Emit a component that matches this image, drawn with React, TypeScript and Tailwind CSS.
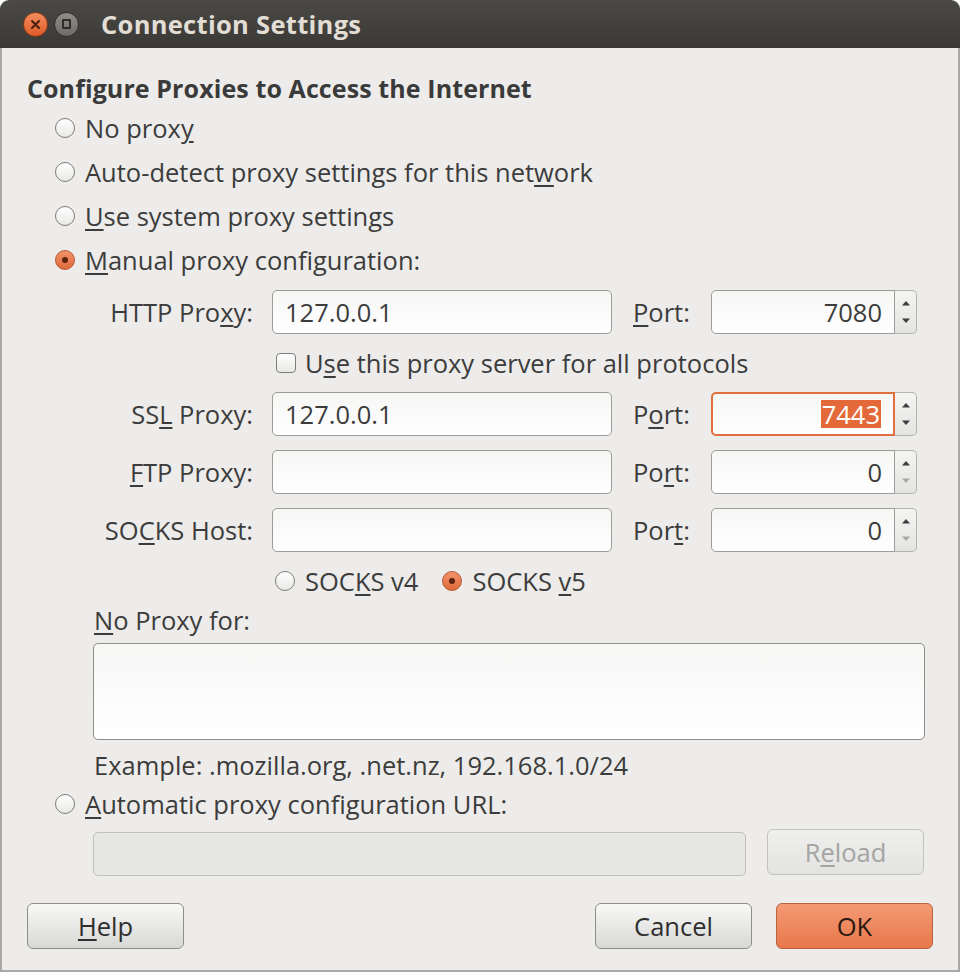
import React from 'react';

const font = { fontFamily: '"Open Sans", "Noto Sans", sans-serif' };

function U({ children }: { children: React.ReactNode }) {
    return <span className="underline underline-offset-[3px] decoration-[1.5px]">{children}</span>;
}

function Radio({ checked = false }: { checked?: boolean }) {
    if (checked) {
        return (
            <div className="w-[20px] h-[20px] rounded-full border border-[#b35a33] bg-gradient-to-b from-[#f2926a] to-[#e06a3a] flex items-center justify-center shrink-0">
                <div className="w-[6px] h-[6px] rounded-full bg-[#5a2410]" />
            </div>
        );
    }
    return <div className="w-[20px] h-[20px] rounded-full border border-[#7d7c78] bg-gradient-to-b from-white to-[#e8e8e6] shrink-0" />;
}

function Spin({ focused = false, value, selected = false }: { focused?: boolean; value: string; selected?: boolean }) {
    return (
        <div className="flex h-[44px] w-[206px]">
            <div
                className={
                    'flex-1 flex items-center justify-end pr-[12px] rounded-l-[5px] bg-gradient-to-b from-[#f6f6f5] to-white ' +
                    (focused ? 'border-2 border-[#e0703f]' : 'border border-[#9d9c98]')
                }
            >
                {selected ? (
                    <span className="bg-[#e4693a] text-white px-[1px] leading-[28px]">{value}</span>
                ) : (
                    <span>{value}</span>
                )}
            </div>
            <div className="w-[22px] border border-l-0 border-[#b3b2ae] rounded-r-[5px] bg-gradient-to-b from-[#f4f4f3] to-[#e4e4e2] flex flex-col items-center justify-between py-[9px]">
                <svg width="10" height="6" viewBox="0 0 10 6"><path d="M1 5.5 L5 1 L9 5.5 Z" fill="#3c3c3c" /></svg>
                <svg width="10" height="6" viewBox="0 0 10 6"><path d="M1 0.5 L5 5 L9 0.5 Z" fill={focused || value === '7080' ? '#3c3c3c' : '#a8a8a6'} /></svg>
            </div>
        </div>
    );
}

function TextBox({ value = '' }: { value?: string }) {
    return (
        <div className="w-[340px] h-[44px] shrink-0 border border-[#9d9c98] rounded-[5px] bg-gradient-to-b from-[#f6f6f5] to-white flex items-center px-[12px]">
            {value}
        </div>
    );
}

function Button({ children, primary = false, disabled = false, className = '' }: { children: React.ReactNode; primary?: boolean; disabled?: boolean; className?: string }) {
    const base = 'h-[46px] w-[157px] rounded-[6px] flex items-center justify-center border ';
    const look = primary
        ? 'border-[#b8653f] bg-gradient-to-b from-[#f39a74] to-[#e8774a] text-[#2a1a12]'
        : disabled
            ? 'border-[#c3c2be] bg-gradient-to-b from-[#efefee] to-[#e3e3e1] text-[#a4a4a2]'
            : 'border-[#8e8d89] bg-gradient-to-b from-[#f8f8f7] to-[#d8d8d6] text-[#2f2f2f]';
    return <div className={base + look + ' ' + className}>{children}</div>;
}

export default function App() {
    const portLabels: React.ReactNode[] = [
        <><U>P</U>ort:</>,
        <>P<U>o</U>rt:</>,
        <>Po<U>r</U>t:</>,
        <>Por<U>t</U>:</>,
    ];

    const rows = [
        { label: <>HTTP Pro<U>x</U>y:</>, value: '127.0.0.1', port: '7080' },
        { label: <>SS<U>L</U> Proxy:</>, value: '127.0.0.1', port: '7443', focused: true, selected: true },
        { label: <><U>F</U>TP Proxy:</>, value: '', port: '0' },
        { label: <>SO<U>C</U>KS Host:</>, value: '', port: '0' },
    ];

    const renderRow = (i: number) => {
        const r = rows[i];
        return (
            <div className="flex items-center h-[44px]">
                <div className="w-[226px] text-right whitespace-nowrap">{r.label}</div>
                <div className="w-[19px] shrink-0" />
                <TextBox value={r.value} />
                <div className="w-[99px] shrink-0 pl-[21px] whitespace-nowrap">{portLabels[i]}</div>
                <Spin value={r.port} focused={r.focused} selected={r.selected} />
            </div>
        );
    };

    return (
        <div className="w-[960px] h-[972px] bg-white text-[#3c3c3c] text-[25.5px] leading-[28px]" style={font}>
            <div className="w-[960px] h-[972px] flex flex-col">
                {/* Title bar */}
                <div className="h-[48px] shrink-0 rounded-t-[9px] bg-gradient-to-b from-[#4a4945] to-[#3a3935] flex items-center pl-[23px]">
                    <div className="w-[25px] h-[25px] rounded-full bg-gradient-to-b from-[#f58c5c] to-[#dd5a27] border border-[#8a3a1a] flex items-center justify-center">
                        <svg width="11" height="11" viewBox="0 0 11 11">
                            <path d="M2 2 L9 9 M9 2 L2 9" stroke="#4a1e0e" strokeWidth="2" strokeLinecap="round" />
                        </svg>
                    </div>
                    <div className="w-[25px] h-[25px] ml-[6px] rounded-full bg-gradient-to-b from-[#8f8e89] to-[#6c6b67] border border-[#2f2e2b] flex items-center justify-center">
                        <div className="w-[9px] h-[10px] border-[2px] border-[#2e2d2a] rounded-[1px]" />
                    </div>
                    <div className="ml-[22px] text-[#e2ded6] font-bold text-[25.5px] tracking-[0.3px]">Connection Settings</div>
                </div>

                {/* Body */}
                <div className="flex-1 bg-[#edecea] border-x-2 border-b-2 border-[#a9a8a4] pl-[25px] pr-[25px] flex flex-col">
                    <div className="mt-[26px] h-[28px] font-bold text-[#3a3a3a] text-[25px] tracking-[0.1px] whitespace-nowrap">
                        Configure Proxies to Access the Internet
                    </div>

                    <div className="mt-[4px] flex flex-col pl-[28px]">
                        <div className="h-[44px] flex items-center gap-[10px]"><Radio /><span>No prox<U>y</U></span></div>
                        <div className="h-[44px] flex items-center gap-[10px]"><Radio /><span>Auto-detect proxy settings for this net<U>w</U>ork</span></div>
                        <div className="h-[44px] flex items-center gap-[10px]"><Radio /><span><U>U</U>se system proxy settings</span></div>
                        <div className="h-[44px] flex items-center gap-[10px]"><Radio checked /><span><U>M</U>anual proxy configuration:</span></div>
                    </div>

                    <div className="mt-[8px] flex flex-col">
                        {renderRow(0)}
                        <div className="h-[58px] flex items-center pl-[249px] gap-[9px]">
                            <div className="w-[20px] h-[20px] rounded-[4px] border border-[#7d7c78] bg-gradient-to-b from-white to-[#e8e8e6]" />
                            <span>U<U>s</U>e this proxy server for all protocols</span>
                        </div>
                        {renderRow(1)}
                        <div className="h-[14px]" />
                        {renderRow(2)}
                        <div className="h-[14px]" />
                        {renderRow(3)}
                    </div>

                    <div className="mt-[4px] h-[50px] flex items-center pl-[248px]">
                        <div className="flex items-center gap-[10px]"><Radio /><span>SOC<U>K</U>S v4</span></div>
                        <div className="flex items-center gap-[10px] ml-[24px]"><Radio checked /><span>SOCKS <U>v</U>5</span></div>
                    </div>

                    <div className="pl-[67px] h-[28px]"><U>N</U>o Proxy for:</div>
                    <div className="ml-[66px] mt-[9px] h-[97px] w-[832px] border border-[#8e8d89] rounded-[5px] bg-gradient-to-b from-[#f7f7f6] to-white" />
                    <div className="pl-[67px] mt-[11px] h-[28px] whitespace-nowrap">Example: .mozilla.org, .net.nz, 192.168.1.0/24</div>

                    <div className="mt-[3px] h-[44px] flex items-center gap-[10px] pl-[28px]">
                        <Radio />
                        <span><U>A</U>utomatic proxy configuration URL:</span>
                    </div>

                    <div className="mt-[2px] flex items-center pl-[66px] gap-[21px]">
                        <div className="w-[653px] h-[44px] mt-[4px] border border-[#c0bfbb] rounded-[5px] bg-[#e6e6e4]" />
                        <Button disabled>R<U>e</U>load</Button>
                    </div>

                    <div className="mt-[27px] flex items-center">
                        <Button><U>H</U>elp</Button>
                        <div className="flex-1" />
                        <Button>Cancel</Button>
                        <Button primary className="ml-[24px]">OK</Button>
                    </div>
                </div>
            </div>
        </div>
    );
}
